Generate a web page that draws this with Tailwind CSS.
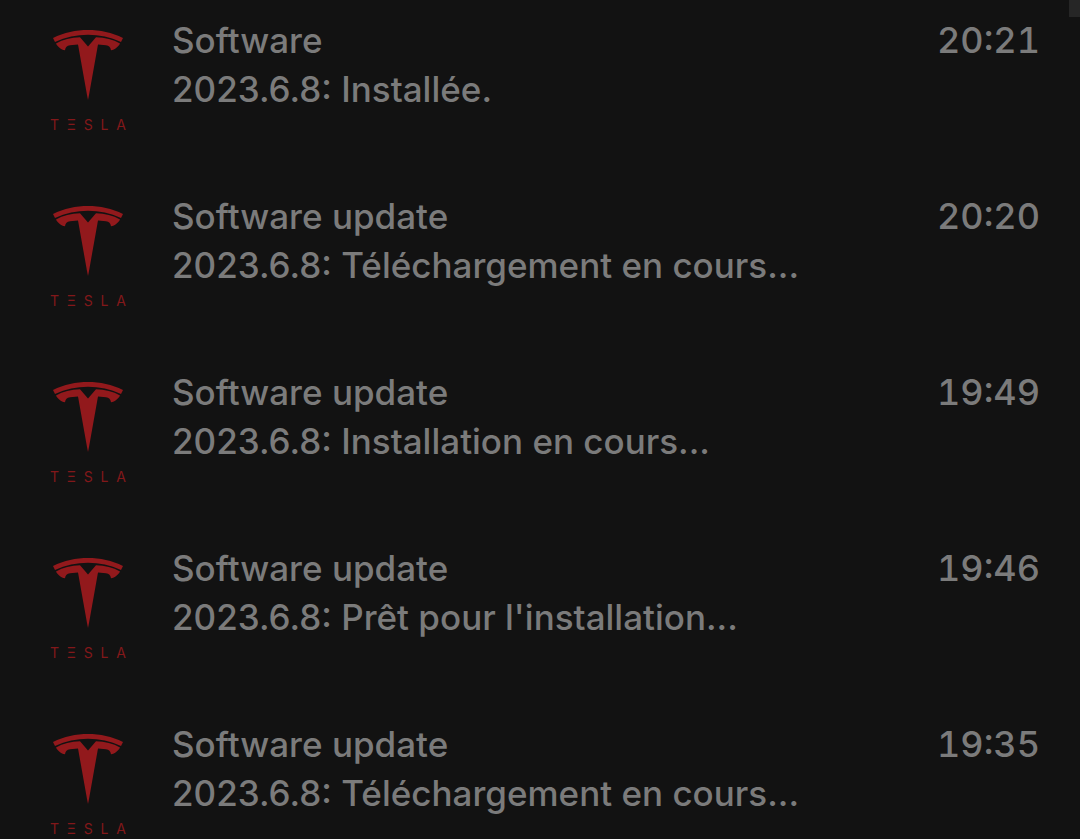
<!DOCTYPE html>
<html lang="fr">
<head>
  <meta charset="UTF-8">
  <meta name="viewport" content="width=device-width, initial-scale=1.0">
  <title>Software updates</title>
  <script src="https://cdn.jsdelivr.net/npm/@tailwindcss/browser@4"></script>
</head>
<body class="relative h-screen overflow-hidden bg-[#121212] font-['Inter','Liberation_Sans',sans-serif] font-medium text-[#7b7b7b]">
  <!-- Tesla emblem and wordmark, shared by every row -->
  <svg class="hidden">
    <symbol id="tesla-t" viewBox="0 0 72 72">
      <path d="M1 9C23-1.6 49-1.6 71 9L69 13C48 3.4 24 3.4 3 13Z" />
      <path d="M4 14.4C11 10.6 19 8.3 28 8.3L36 17.5L44 8.3C53 8.3 61 10.6 68 14.4C66.5 17.5 63 20.6 59 21.2C58.6 18.4 57 16.6 54 16.2L46 15.4L37 66L36 71L35 66L26 15.4L18 16.2C15 16.6 13.4 18.4 13 21.2C9 20.6 5.5 17.5 4 14.4Z" />
    </symbol>
  </svg>

  <ul class="pt-4">
    <li class="flex h-44 pr-10 pl-12">
      <div class="flex w-20 shrink-0 flex-col items-center pt-[13px] text-[#92191c]">
        <svg class="size-18 fill-current"><use href="#tesla-t" /></svg>
        <div class="mt-4 flex w-full justify-between px-0.5 text-sm/4 font-normal text-[#82181a]"><span>T</span><span>Ξ</span><span>S</span><span>L</span><span>A</span></div>
      </div>
      <div class="ml-11 grow text-[35px]/[49px]">
        <h2>Software</h2>
        <p>2023.6.8: Installée.</p>
      </div>
      <time class="text-4xl/[49px] tabular-nums">20:21</time>
    </li>
    <li class="flex h-44 pr-10 pl-12">
      <div class="flex w-20 shrink-0 flex-col items-center pt-[13px] text-[#92191c]">
        <svg class="size-18 fill-current"><use href="#tesla-t" /></svg>
        <div class="mt-4 flex w-full justify-between px-0.5 text-sm/4 font-normal text-[#82181a]"><span>T</span><span>Ξ</span><span>S</span><span>L</span><span>A</span></div>
      </div>
      <div class="ml-11 grow text-[35px]/[49px]">
        <h2>Software update</h2>
        <p>2023.6.8: Téléchargement en cours...</p>
      </div>
      <time class="text-4xl/[49px] tabular-nums">20:20</time>
    </li>
    <li class="flex h-44 pr-10 pl-12">
      <div class="flex w-20 shrink-0 flex-col items-center pt-[13px] text-[#92191c]">
        <svg class="size-18 fill-current"><use href="#tesla-t" /></svg>
        <div class="mt-4 flex w-full justify-between px-0.5 text-sm/4 font-normal text-[#82181a]"><span>T</span><span>Ξ</span><span>S</span><span>L</span><span>A</span></div>
      </div>
      <div class="ml-11 grow text-[35px]/[49px]">
        <h2>Software update</h2>
        <p>2023.6.8: Installation en cours...</p>
      </div>
      <time class="text-4xl/[49px] tabular-nums">19:49</time>
    </li>
    <li class="flex h-44 pr-10 pl-12">
      <div class="flex w-20 shrink-0 flex-col items-center pt-[13px] text-[#92191c]">
        <svg class="size-18 fill-current"><use href="#tesla-t" /></svg>
        <div class="mt-4 flex w-full justify-between px-0.5 text-sm/4 font-normal text-[#82181a]"><span>T</span><span>Ξ</span><span>S</span><span>L</span><span>A</span></div>
      </div>
      <div class="ml-11 grow text-[35px]/[49px]">
        <h2>Software update</h2>
        <p>2023.6.8: Prêt pour l'installation...</p>
      </div>
      <time class="text-4xl/[49px] tabular-nums">19:46</time>
    </li>
    <li class="flex h-44 pr-10 pl-12">
      <div class="flex w-20 shrink-0 flex-col items-center pt-[13px] text-[#92191c]">
        <svg class="size-18 fill-current"><use href="#tesla-t" /></svg>
        <div class="mt-4 flex w-full justify-between px-0.5 text-sm/4 font-normal text-[#82181a]"><span>T</span><span>Ξ</span><span>S</span><span>L</span><span>A</span></div>
      </div>
      <div class="ml-11 grow text-[35px]/[49px]">
        <h2>Software update</h2>
        <p>2023.6.8: Téléchargement en cours...</p>
      </div>
      <time class="text-4xl/[49px] tabular-nums">19:35</time>
    </li>
  </ul>

  <!-- scrollbar thumb -->
  <div class="absolute top-0 right-0 h-[17px] w-[11px] bg-[#262626]"></div>
</body>
</html>
